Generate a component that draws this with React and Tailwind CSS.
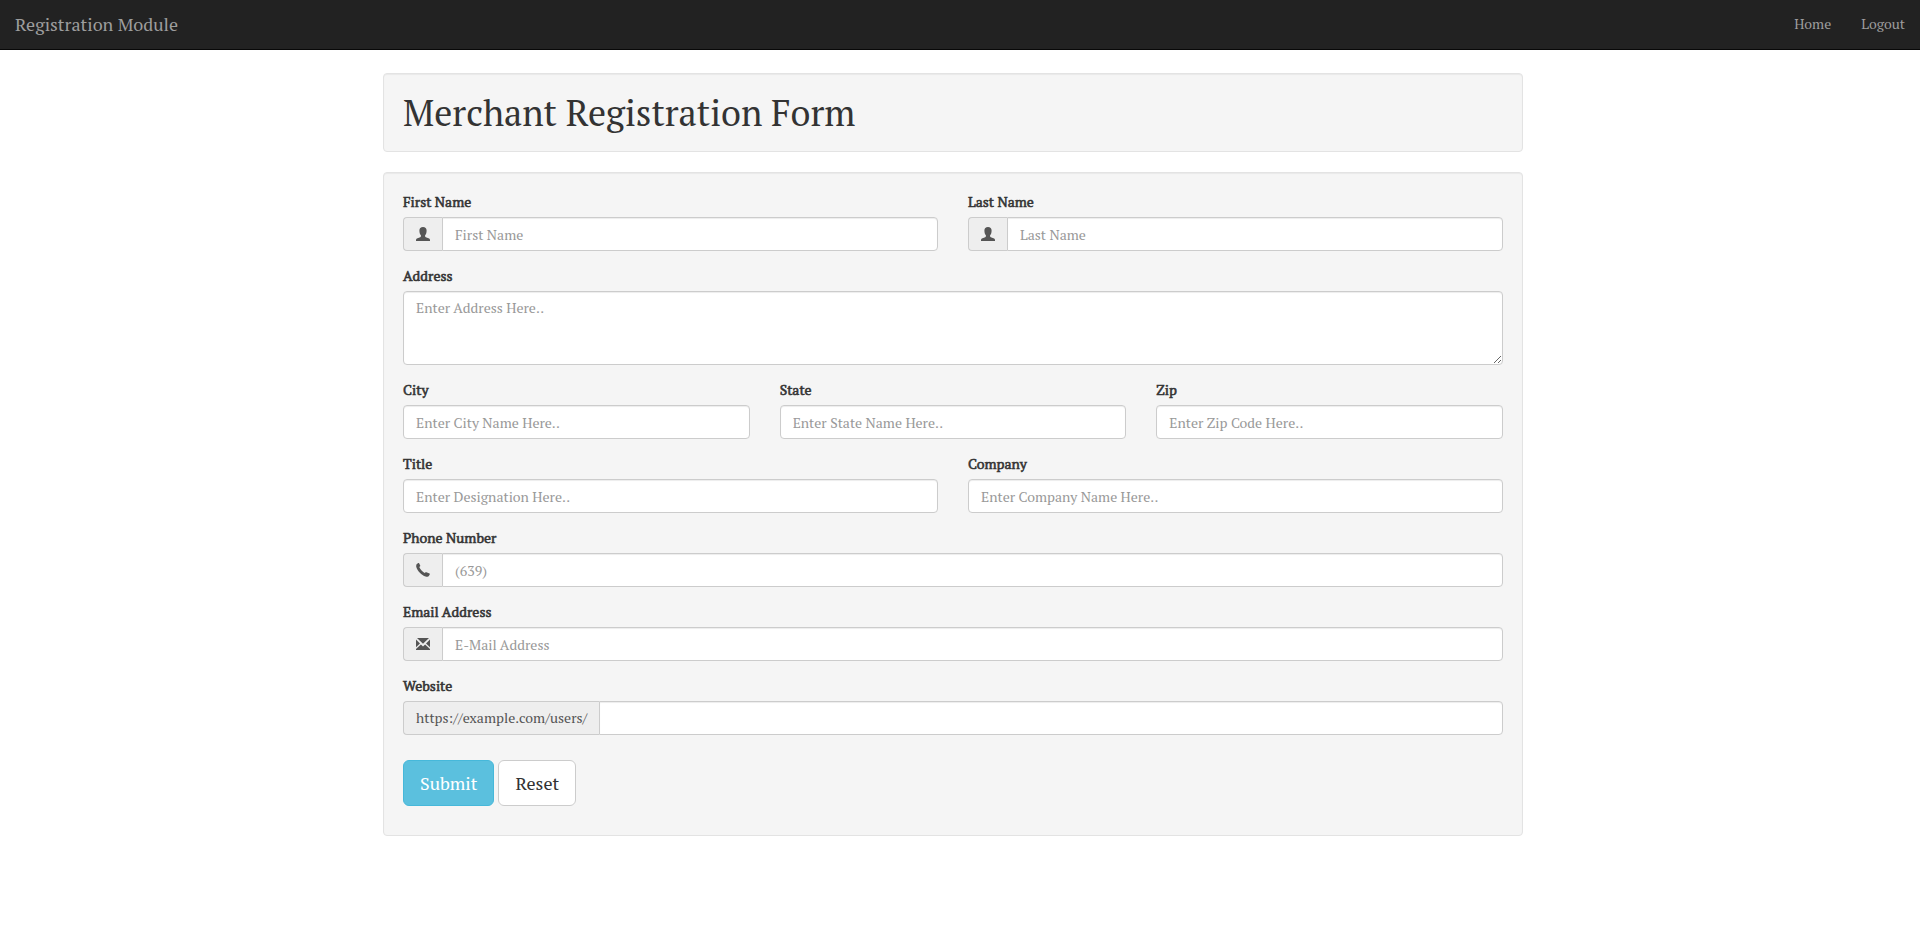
import React from "react";

const INPUT =
  "block w-full min-w-0 border border-[#cccccc] bg-white px-3 text-sm leading-5 text-[#555555] shadow-[inset_0_1px_1px_rgba(0,0,0,0.075)] outline-none placeholder:text-[#999999] placeholder:opacity-100 focus:border-[#66afe9]";

function UserIcon() {
  return (
    <svg viewBox="0 0 14 14" className="size-[14px]" fill="currentColor" aria-hidden="true">
      <path d="M7 0C4.700 0 3.400 1.300 3.400 3.500c0 2.300.6 3.900 1.500 4.700v1c0 .5-.2.800-.7 1L1.500 11.300C.5 11.700 0 12.300 0 13.200V14h14v-.8c0-.9-.5-1.500-1.500-1.900L9.800 10.200c-.5-.2-.7-.5-.7-1v-1c.9-.8 1.500-2.400 1.500-4.700C10.600 1.300 9.300 0 7 0z" />
    </svg>
  );
}

function PhoneIcon() {
  return (
    <svg viewBox="0 0 14 14" className="size-[14px]" fill="currentColor" aria-hidden="true">
      <path d="M1.200.8 2.300.1c.3-.2.6-.1.8.2l1.100 2.200c.2.3.1.6-.1.8l-.8.800c.5 1.800 3.200 4.700 5.300 5.900l1-.7c.3-.2.5-.2.8-.1l3.100 1.200c.4.2.5.5.3.9l-.8 1.400c-.6 1-1.900 1.400-3.400.9C5.600 12.300 1.400 8 .3 4 0 2.600.2 1.400 1.200.8z" />
    </svg>
  );
}

function EnvelopeIcon() {
  return (
    <svg viewBox="0 0 14 12" className="h-3 w-[14px]" fill="currentColor" aria-hidden="true">
      <path d="M1 0h12L7 5.800zM0 1.500 4 5.500 0 9.300zM14 1.500 10 5.500 14 9.300zM0 12v-1.100L4.900 6.500 7 8.500l2.100-2L14 10.900V12z" />
    </svg>
  );
}

function Field({ id, label, children }) {
  return (
    <div className="min-w-0">
      <label
        htmlFor={id}
        className="mb-[5px] block text-sm leading-5 [-webkit-text-stroke:0.04em_currentColor]"
      >
        {label}
      </label>
      {children}
    </div>
  );
}

function TextField({ id, label, type = "text", placeholder, addon }) {
  return (
    <Field id={id} label={label}>
      <div className="flex h-[34px]">
        {addon && (
          <span className="flex shrink-0 items-center justify-center rounded-l border border-r-0 border-[#cccccc] bg-[#eeeeee] px-3 text-sm leading-5 text-[#555555]">
            {addon}
          </span>
        )}
        <input
          id={id}
          name={id}
          type={type}
          placeholder={placeholder}
          className={`${INPUT} pt-[7px] pb-[5px] ${addon ? "rounded-r" : "rounded"}`}
        />
      </div>
    </Field>
  );
}

const WELL =
  "rounded border border-[#e3e3e3] bg-[#f5f5f5] px-[19px] shadow-[inset_0_1px_1px_rgba(0,0,0,0.05)]";

export default function App() {
  return (
    <div className="min-h-screen bg-white font-['PT_Serif','Liberation_Serif',serif] text-sm text-[#333333]">
      <nav className="flex h-[50px] items-center justify-between border-b border-[#080808] bg-[#222222] px-[15px] pb-0.5 text-[#9d9d9d]">
        <a href="#" className="text-lg leading-5">
          Registration Module
        </a>
        <div className="flex gap-[30px] text-sm leading-5">
          <a href="#home">Home</a>
          <a href="#logout">Logout</a>
        </div>
      </nav>

      <main className="pt-[23px] pr-[14px] pb-5">
        <div className="mx-auto flex max-w-[1140px] flex-col gap-5">
          <header className={`${WELL} py-[19px]`}>
            <h1 className="text-4xl leading-[39px] font-normal">Merchant Registration Form</h1>
          </header>

          <form className={`${WELL} flex flex-col gap-[15px] pt-[19px] pb-[29px]`}>
            <div className="grid grid-cols-2 gap-[30px]">
              <TextField id="firstName" label="First Name" placeholder="First Name" addon={<UserIcon />} />
              <TextField id="lastName" label="Last Name" placeholder="Last Name" addon={<UserIcon />} />
            </div>
            <Field id="address" label="Address">
              <textarea
                id="address"
                name="address"
                rows={3}
                placeholder="Enter Address Here.."
                className={`${INPUT} h-[74px] resize rounded py-1.5`}
              />
            </Field>
            <div className="grid grid-cols-3 gap-[30px]">
              <TextField id="city" label="City" placeholder="Enter City Name Here.." />
              <TextField id="state" label="State" placeholder="Enter State Name Here.." />
              <TextField id="zip" label="Zip" placeholder="Enter Zip Code Here.." />
            </div>
            <div className="grid grid-cols-2 gap-[30px]">
              <TextField id="title" label="Title" placeholder="Enter Designation Here.." />
              <TextField id="company" label="Company" placeholder="Enter Company Name Here.." />
            </div>
            <TextField id="phone" label="Phone Number" type="tel" placeholder="(639)" addon={<PhoneIcon />} />
            <TextField id="email" label="Email Address" type="email" placeholder="E-Mail Address" addon={<EnvelopeIcon />} />
            <TextField id="website" label="Website" addon="https://example.com/users/" />
            <div className="flex gap-1 pt-2.5">
              <button
                type="submit"
                className="h-[46px] rounded-md border border-[#46b8da] bg-[#5bc0de] px-4 text-lg leading-6 text-white"
              >
                Submit
              </button>
              <button
                type="reset"
                className="h-[46px] rounded-md border border-[#cccccc] bg-white px-4 text-lg leading-6 text-[#333333]"
              >
                Reset
              </button>
            </div>
          </form>
        </div>
      </main>
    </div>
  );
}
